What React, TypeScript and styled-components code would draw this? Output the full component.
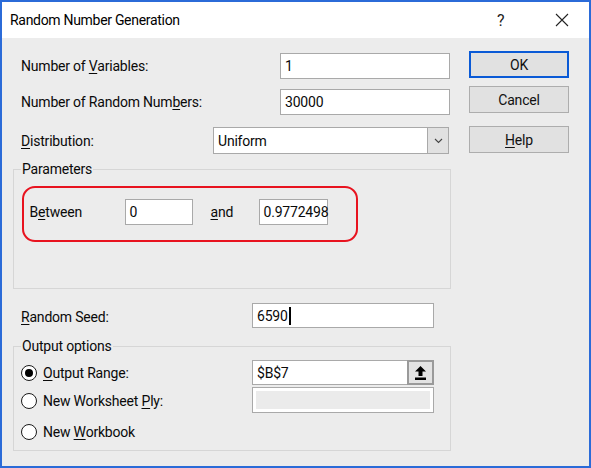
import React from 'react';
import styled, { createGlobalStyle } from 'styled-components';

const Global = createGlobalStyle`
  html, body { margin: 0; padding: 0; background: #ececec; }
  body { font-family: Roboto, "Noto Sans", Arial, sans-serif; }
  * { box-sizing: border-box; }
`;

const Window = styled.div`
  width: 591px;
  height: 468px;
  border: 2px solid #2b6bd8;
  background: #ececec;
  display: flex;
  flex-direction: column;
  color: #0a0a0a;
  font-size: 14px;
  letter-spacing: -0.2px;
  overflow: hidden;
`;

const TitleBar = styled.div`
  height: 36px;
  flex: none;
  background: #fff;
  display: flex;
  align-items: center;
  padding: 0 20px 0 8px;
`;

const Title = styled.div`
  font-size: 14px;
  letter-spacing: -0.3px;
  color: #000;
  flex: 1;
`;

const Help = styled.div`
  font-size: 16px;
  width: 12px;
  margin-right: 46px;
  color: #222;
`;

const Body = styled.div`
  flex: 1;
  display: flex;
  padding: 13px 0 0 11px;
  gap: 18px;
`;

const Main = styled.div`
  width: 438px;
  display: flex;
  flex-direction: column;
  padding-top: 2px;
`;

const Buttons = styled.div`
  width: 100px;
  display: flex;
  flex-direction: column;
`;

const Button = styled.button<{ $primary?: boolean; $gap?: number }>`
  height: 27px;
  margin-top: ${p => p.$gap ?? 0}px;
  background: #e1e1e1;
  border: ${p => (p.$primary ? '2px solid #0a5ad6' : '1px solid #adadad')};
  font-family: inherit;
  font-size: 14px;
  letter-spacing: -0.2px;
  color: #111;
  padding: 0;
`;

const Row = styled.div<{ $gap: number; $h: number }>`
  display: flex;
  align-items: center;
  margin-top: ${p => p.$gap}px;
  height: ${p => p.$h}px;
  padding-left: 8px;
`;

const Label = styled.div<{ $w: number; $pl?: number; $pt?: number }>`
  width: ${p => p.$w}px;
  padding-left: ${p => p.$pl ?? 0}px;
  padding-top: ${p => p.$pt ?? 0}px;
  flex: none;
  white-space: nowrap;
`;

const Input = styled.div<{ $w: number; $h?: number }>`
  width: ${p => p.$w}px;
  height: ${p => p.$h ?? 26}px;
  flex: none;
  background: #fff;
  border: 1px solid #a9a9a9;
  display: flex;
  align-items: center;
  padding-left: 4px;
  white-space: nowrap;
`;

const Caret = styled.span`
  display: inline-block;
  width: 2px;
  height: 18px;
  background: #000;
  margin-left: 1px;
`;

const Select = styled.div`
  width: 236px;
  height: 27px;
  background: #fff;
  border: 1px solid #a9a9a9;
  display: flex;
  align-items: stretch;
`;

const SelectText = styled.div`
  flex: 1;
  display: flex;
  align-items: center;
  padding-left: 4px;
`;

const DropButton = styled.div`
  width: 21px;
  background: #e1e1e1;
  border-left: 1px solid #a9a9a9;
  display: flex;
  align-items: center;
  justify-content: center;
`;

const Group = styled.div<{ $gap: number; $h: number }>`
  position: relative;
  margin-top: ${p => p.$gap}px;
  height: ${p => p.$h}px;
  border: 1px solid #d6d6d6;
`;

const Legend = styled.div`
  position: absolute;
  top: -10px;
  left: 7px;
  padding: 0 1px;
  background: #ececec;
  line-height: 18px;
`;

const Highlight = styled.div`
  margin: 16px 0 0 8px;
  width: 336px;
  height: 56px;
  border: 2.5px solid #e8131f;
  border-radius: 13px;
  display: flex;
  align-items: center;
  padding: 0 0 4px 5.5px;
`;

const OutputGrid = styled.div`
  display: grid;
  grid-template-columns: 231px 182px;
  grid-template-rows: 25px 26px 26px;
  row-gap: 2px;
  padding: 13px 0 0 7px;
  & > :nth-child(5) { margin-top: 6px; }
`;

const RadioRow = styled.div`
  display: flex;
  align-items: center;
  gap: 6px;
  padding-top: 1px;
`;

const RadioCircle = styled.span<{ $on?: boolean }>`
  width: 16px;
  height: 16px;
  border-radius: 50%;
  border: 1.3px solid #1a1a1a;
  background: #fff;
  display: flex;
  align-items: center;
  justify-content: center;
  &::after {
    content: '';
    width: 8px;
    height: 8px;
    border-radius: 50%;
    background: ${p => (p.$on ? '#000' : 'transparent')};
  }
`;

const RangeBox = styled.div`
  height: 25px;
  background: #fff;
  border: 1px solid #a9a9a9;
  display: flex;
  align-items: stretch;
`;

const RangeText = styled.div`
  flex: 1;
  display: flex;
  align-items: center;
  padding-left: 4px;
`;

const RangeButton = styled.div`
  width: 27px;
  background: #e3e3e3;
  border: 2px solid #9a9a9a;
  margin: -1px -1px -1px 0;
  display: flex;
  align-items: center;
  justify-content: center;
`;

const DisabledBox = styled.div`
  height: 26px;
  background: #ebebeb;
  border: 1px solid #a9a9a9;
  box-shadow: inset 0 0 0 3px #fff;
`;

const U = styled.span`
  text-decoration: underline;
  text-underline-offset: 2px;
`;

const CloseIcon = () => (
  <svg width="14" height="14" viewBox="0 0 14 14">
    <path d="M1 1 L13 13 M13 1 L1 13" stroke="#222" strokeWidth="1.1" fill="none" />
  </svg>
);

const Chevron = () => (
  <svg width="9" height="6" viewBox="0 0 9 6">
    <path d="M1 1 L4.5 4.5 L8 1" stroke="#444" strokeWidth="1.1" fill="none" />
  </svg>
);

const UploadIcon = () => (
  <svg width="11" height="14" viewBox="0 0 11 14">
    <path d="M5.5 0 L11 5.5 H7.5 V10 H3.5 V5.5 H0 Z" fill="#000" />
    <rect x="0" y="11.5" width="11" height="2.5" fill="#000" />
  </svg>
);

export default function App() {
  return (
    <>
      <Global />
      <Window>
        <TitleBar>
          <Title>Random Number Generation</Title>
          <Help>?</Help>
          <CloseIcon />
        </TitleBar>
        <Body>
          <Main>
            <Row $gap={0} $h={26}>
              <Label $w={259}>Number of <U>V</U>ariables:</Label>
              <Input $w={170}>1</Input>
            </Row>
            <Row $gap={10} $h={26}>
              <Label $w={259}>Number of Random Num<U>b</U>ers:</Label>
              <Input $w={170}>30000</Input>
            </Row>
            <Row $gap={12} $h={27}>
              <Label $w={192}><U>D</U>istribution:</Label>
              <Select>
                <SelectText>Uniform</SelectText>
                <DropButton><Chevron /></DropButton>
              </Select>
            </Row>
            <Group $gap={15} $h={120}>
              <Legend>Parameters</Legend>
              <Highlight>
                <Label $w={95}>B<U>e</U>tween</Label>
                <Input $w={68}>0</Input>
                <Label $w={66} $pl={18}><U>a</U>nd</Label>
                <Input $w={69}>0.9772498</Input>
              </Highlight>
            </Group>
            <Row $gap={14} $h={25}>
              <Label $w={231} $pt={2}><U>R</U>andom Seed:</Label>
              <Input $w={182} $h={25}>6590<Caret /></Input>
            </Row>
            <Group $gap={18} $h={105}>
              <Legend>Output options</Legend>
              <OutputGrid>
                <RadioRow>
                  <RadioCircle $on />
                  <span><U>O</U>utput Range:</span>
                </RadioRow>
                <RangeBox>
                  <RangeText>$B$7</RangeText>
                  <RangeButton><UploadIcon /></RangeButton>
                </RangeBox>
                <RadioRow>
                  <RadioCircle />
                  <span>New Worksheet <U>P</U>ly:</span>
                </RadioRow>
                <DisabledBox />
                <RadioRow>
                  <RadioCircle />
                  <span>New <U>W</U>orkbook</span>
                </RadioRow>
              </OutputGrid>
            </Group>
          </Main>
          <Buttons>
            <Button $primary>OK</Button>
            <Button $gap={8}>Cancel</Button>
            <Button $gap={13}><U>H</U>elp</Button>
          </Buttons>
        </Body>
      </Window>
    </>
  );
}
